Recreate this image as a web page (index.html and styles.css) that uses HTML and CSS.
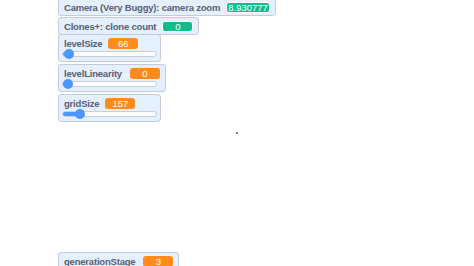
FILE: index.html
```html
<!DOCTYPE html>
<html lang="en">
<head>
    <meta charset="UTF-8">
    <title>Stage</title>
    <link rel="stylesheet" href="styles.css">
</head>
<body>
<div class="stage">
    <div class="monitor m-zoom">
        <div class="row">
            <span class="label">Camera (Very Buggy): camera zoom</span>
            <span class="value green">8.930777</span>
        </div>
    </div>
    <div class="monitor m-clones">
        <div class="row">
            <span class="label">Clones+: clone count</span>
            <span class="value green">0</span>
        </div>
    </div>
    <div class="monitor slider-monitor m-level">
        <div class="row">
            <span class="label">levelSize</span>
            <span class="value">66</span>
        </div>
        <div class="slider"><div class="fill" style="width: 6px"></div><div class="thumb" style="left: 6px"></div></div>
    </div>
    <div class="monitor slider-monitor m-linear">
        <div class="row">
            <span class="label">levelLinearity</span>
            <span class="value">0</span>
        </div>
        <div class="slider"><div class="fill" style="width: 5px"></div><div class="thumb" style="left: 5px"></div></div>
    </div>
    <div class="monitor slider-monitor m-grid">
        <div class="row">
            <span class="label">gridSize</span>
            <span class="value">157</span>
        </div>
        <div class="slider"><div class="fill" style="width: 17px"></div><div class="thumb" style="left: 17px"></div></div>
    </div>
    <div class="monitor m-stage">
        <div class="row">
            <span class="label">generationStage</span>
            <span class="value">3</span>
        </div>
    </div>
    <div class="dot"></div>
</div>
</body>
</html>
```

FILE: styles.css
```css
* {
    box-sizing: border-box;
}

body {
    margin: 0;
    padding: 0;
    background: #ffffff;
    font-family: 'Liberation Sans', Arial, sans-serif;
    overflow: hidden;
}

.stage {
    position: relative;
    width: 474px;
    height: 266px;
    overflow: hidden;
    background: #ffffff;
}

/* Monitores de variables */
.monitor {
    position: absolute;
    left: 58px;
    background: #e5f0ff;
    border: 1px solid rgba(0, 0, 0, 0.15);
    border-radius: 4px;
    padding: 2px 5px;
    color: #575e75;
}

.row {
    display: flex;
    align-items: center;
    height: 12px;
}

.label {
    font-size: 9.5px;
    font-weight: bold;
    letter-spacing: -0.2px;
    white-space: nowrap;
}

.value {
    min-width: 30px;
    height: 11px;
    margin-left: 6px;
    padding: 0 2px;
    border-radius: 3px;
    background: #ff8c1a;
    color: #ffffff;
    font-size: 9.5px;
    line-height: 11px;
    text-align: center;
}

.value.green {
    min-width: 31px;
    padding: 0 1px;
    background: #0fbd8c;
    border: 1px solid #ffffff;
    line-height: 9px;
}

.m-zoom {
    top: -2px;
}

.m-clones {
    top: 17px;
}

.slider-monitor {
    padding: 2px 3px 4px 3px;
}

.slider-monitor .row {
    padding-left: 2px;
    padding-right: 2px;
}

.m-linear .value {
    margin-left: 8px;
}

.m-level {
    top: 34px;
}

.m-linear {
    top: 64px;
}

.m-grid {
    top: 94px;
}

.m-stage {
    top: 252px;
}

.m-stage .value {
    margin-left: 8px;
}

.slider {
    position: relative;
    width: 95px;
    height: 6px;
    margin-top: 2px;
    background: #ffffff;
    border: 1px solid #c9ced8;
    border-radius: 3px;
}

.fill {
    height: 100%;
    background: #4c97ff;
    border-radius: 3px 0 0 3px;
}

.thumb {
    position: absolute;
    top: -3px;
    width: 10px;
    height: 10px;
    margin-left: -5px;
    background: #4c97ff;
    border-radius: 50%;
}

.dot {
    position: absolute;
    left: 236px;
    top: 132px;
    width: 2px;
    height: 2px;
    background: #8a7a99;
}
```
